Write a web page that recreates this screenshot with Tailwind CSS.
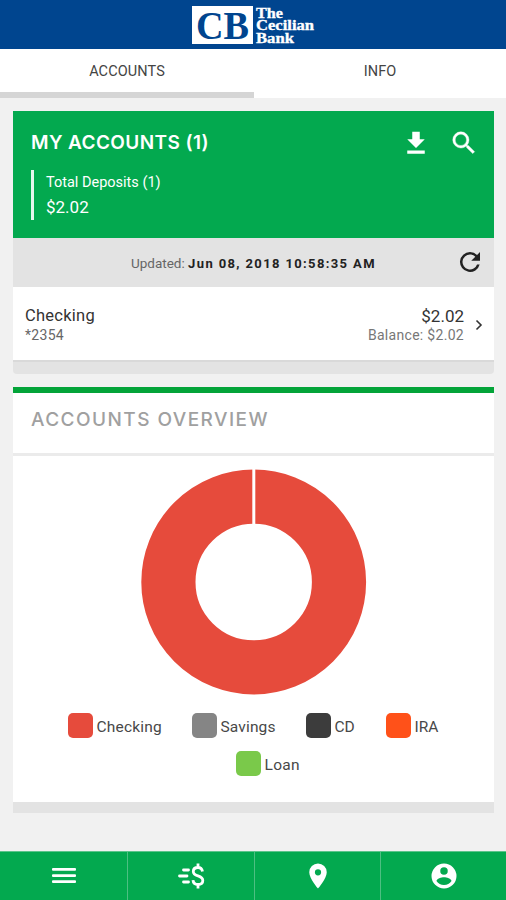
<!DOCTYPE html>
<html lang="en">
<head>
<meta charset="utf-8">
<title>The Cecilian Bank</title>
<script src="https://cdn.jsdelivr.net/npm/@tailwindcss/browser@4"></script>
</head>
<body class="w-[506px] h-[900px] overflow-hidden flex flex-col bg-[#f1f1f1] font-['Roboto',sans-serif] text-[#333]">
<header class="h-[49px] shrink-0 bg-[#00458f] flex pl-[192px] pt-[6px]">
  <div class="w-[61px] h-[38px] bg-white">
    <svg class="overflow-visible" width="61" height="38" viewBox="0 0 61 38"><text x="4" y="32.5" textLength="53" lengthAdjust="spacingAndGlyphs" font-family="Liberation Serif, serif" font-weight="700" font-size="41" fill="#00458f">CB</text></svg>
  </div>
  <svg class="overflow-visible" width="64" height="42" viewBox="0 0 64 42" font-family="Liberation Serif, serif" font-weight="700" font-size="14" fill="#fff" stroke="#fff" stroke-width=".3"><text x="3" y="11.5" textLength="27" lengthAdjust="spacingAndGlyphs">The</text><text x="3" y="24.2" textLength="58" lengthAdjust="spacingAndGlyphs">Cecilian</text><text x="3" y="37" textLength="38" lengthAdjust="spacingAndGlyphs">Bank</text></svg>
</header>
<nav class="h-[49px] shrink-0 bg-white flex text-[14.5px] leading-[45px] text-center text-[#444]">
  <div class="w-[254px] border-b-[6px] border-[#d5d5d5] tracking-[0.1px]">ACCOUNTS</div>
  <div class="w-[252px] tracking-[0.1px]">INFO</div>
</nav>
<main class="flex-1 flex flex-col pl-[13px] pr-[12px] pt-[13px] gap-[13px]">
  <section class="h-[263px] flex flex-col rounded-b bg-[#e3e3e3]">
    <div class="h-[127px] bg-[#03a94f] text-white pl-[18px] pr-[15px] pt-[17px]">
      <div class="h-[30px] flex items-center">
        <h1 class="font-['Inter',sans-serif] font-semibold text-[19px] tracking-[0.4px] whitespace-nowrap flex-1 pt-px">MY ACCOUNTS (1)</h1>
        <svg class="mr-[18px]" width="30" height="30" viewBox="0 0 24 24" fill="#fff"><path d="M19 9h-4V3H9v6H5l7 7 7-7zM5 18v2.500h14V18H5z"/></svg>
        <svg width="30" height="30" viewBox="0 0 24 24" fill="#fff" stroke="#fff" stroke-width=".3"><path d="M15.5 14h-.79l-.28-.27A6.47 6.47 0 0 0 16 9.5 6.5 6.5 0 1 0 9.5 16c1.61 0 3.09-.59 4.23-1.57l.27.28v.79l5 4.99L20.49 19l-4.99-5zm-6 0C7.01 14 5 11.99 5 9.5S7.01 5 9.5 5 14 7.01 14 9.5 11.99 14 9.5 14z"/></svg>
      </div>
      <div class="mt-[12px] h-[50px] border-l-[3px] border-white/90 pl-[12px]">
        <p class="text-[14.5px] leading-[26px]">Total Deposits (1)</p>
        <p class="text-[17px] leading-[23px]">$2.02</p>
      </div>
    </div>
    <div class="h-[49px] flex items-center pl-[118px] pr-[9px] text-[13.5px]">
      <p class="flex-1 whitespace-nowrap pt-[2px] text-[#666]">Updated: <b class="font-bold text-[13px] tracking-[1.37px] text-[#222]">Jun 08, 2018 10:58:35 AM</b></p>
      <svg class="mb-px" width="30" height="30" viewBox="0 0 24 24" fill="#222"><path d="M17.65 6.35A7.96 7.96 0 0 0 12 4a8 8 0 1 0 7.73 10h-2.08A6 6 0 1 1 12 6c1.66 0 3.14.69 4.22 1.78L13 11h7V4l-2.35 2.35z"/></svg>
    </div>
    <div class="h-[75px] bg-white border-b-2 border-[#d9d9d9] flex items-center pl-[12px] pr-[11px] pt-[2px]">
      <div class="flex-1">
        <p class="text-[16.5px] leading-[20px] tracking-[0.25px]">Checking</p>
        <p class="text-[14px] leading-[18px] text-[#666] tracking-[0.3px]">*2354</p>
      </div>
      <div class="text-right mr-[11px]">
        <p class="text-[17px] leading-[20px]">$2.02</p>
        <p class="text-[14px] leading-[18px] text-[#777] tracking-[0.3px]">Balance: $2.02</p>
      </div>
      <svg width="8" height="12" viewBox="0 0 8 12" fill="none" stroke="#333" stroke-width="1.6"><path d="M1.5 1.5 6 6 1.5 10.5"/></svg>
    </div>
  </section>
  <section class="h-[426px] flex flex-col bg-white border-b-[11px] border-[#e3e3e3]">
    <div class="h-[69px] border-t-[6px] border-t-[#03a439] border-b-[3px] border-b-[#ebebeb] pl-[18px] pt-[13px]">
      <h2 class="font-['Inter',sans-serif] font-medium text-[19px] leading-[28px] tracking-[1.45px] text-[#a0a0a0] whitespace-nowrap">ACCOUNTS OVERVIEW</h2>
    </div>
    <svg class="mt-[12px] ml-[127px] shrink-0" width="228" height="228" viewBox="0 0 228 228"><circle cx="113.7" cy="114" r="85.3" fill="none" stroke="#e64b3c" stroke-width="54.2"/><path d="M113.8 0V60" stroke="#fff" stroke-width="3"/></svg>
    <div class="mt-[17px] flex flex-col items-center gap-[13px] text-[15.5px] leading-[25px] text-[#484848] whitespace-nowrap">
      <div class="flex gap-[30px] mr-px">
        <div class="w-[94px] flex gap-[4px]"><i class="size-[25px] shrink-0 rounded-[5px] bg-[#e64b3c]"></i><span class="pt-[2px] tracking-[0.2px]">Checking</span></div>
        <div class="w-[84px] flex gap-[4px]"><i class="size-[25px] shrink-0 rounded-[5px] bg-[#858585]"></i><span class="pt-[2px] tracking-[0.15px]">Savings</span></div>
        <div class="w-[50px] flex gap-[4px]"><i class="size-[25px] shrink-0 rounded-[5px] bg-[#3c3c3c]"></i><span class="pt-[2px]">CD</span></div>
        <div class="w-[53px] flex gap-[4px]"><i class="size-[25px] shrink-0 rounded-[5px] bg-[#ff5119]"></i><span class="pt-[2px]">IRA</span></div>
      </div>
      <div class="w-[64px] ml-[28px] -mt-[2px] flex gap-[4px]"><i class="size-[25px] shrink-0 rounded-[5px] bg-[#7ac94a]"></i><span class="pt-[2px] tracking-[0.3px]">Loan</span></div>
    </div>
  </section>
</main>
<footer class="h-[49px] shrink-0 bg-[#03a94f] border-t border-[#5cc48b] grid grid-cols-[128px_127px_126px_125px] *:flex *:items-center *:justify-center">
  <div class="border-r border-[#4dbf82]"><svg width="24" height="18" viewBox="0 0 24 18" fill="#fff"><rect y="1" width="24" height="2.800" rx="1"/><rect y="7.2" width="24" height="2.800" rx="1"/><rect y="13.3" width="24" height="2.800" rx="1"/></svg></div>
  <div class="border-r border-[#4dbf82]"><svg width="28" height="28" viewBox="0 0 28 28" fill="none" stroke="#fff" stroke-width="2.8"><g stroke-linecap="round"><path d="M6.500 8h5M2.500 14h7.500M6.500 20h5"/></g><path d="M25.5 9.5C25 6.8 23.5 5.5 21 5.5c-2.800 0-4.700 1.500-4.700 3.900 0 2.700 2.200 3.700 4.700 4.500 2.800.9 4.800 1.900 4.800 4.600 0 2.500-2 4-4.800 4-3 0-4.800-1.600-5-4.400M21 1.500v4.500M21 22v4.500"/></svg></div>
  <div class="border-r border-[#4dbf82]"><svg width="30" height="30" viewBox="0 0 24 24" fill="#fff"><path d="M12 2a7 7 0 0 0-7 7c0 5.250 7 13 7 13s7-7.750 7-13a7 7 0 0 0-7-7zm0 9.500a2.500 2.500 0 1 1 0-5 2.500 2.500 0 0 1 0 5z"/></svg></div>
  <div><svg width="30" height="30" viewBox="0 0 24 24" fill="#fff"><path d="M12 2a10 10 0 1 0 0 20 10 10 0 0 0 0-20zm0 3a3 3 0 1 1 0 6 3 3 0 0 1 0-6zm0 14.200a7.200 7.200 0 0 1-6-3.220c.03-1.990 4-3.080 6-3.080 1.990 0 5.970 1.090 6 3.080a7.200 7.200 0 0 1-6 3.220z"/></svg></div>
</footer>
</body>
</html>
